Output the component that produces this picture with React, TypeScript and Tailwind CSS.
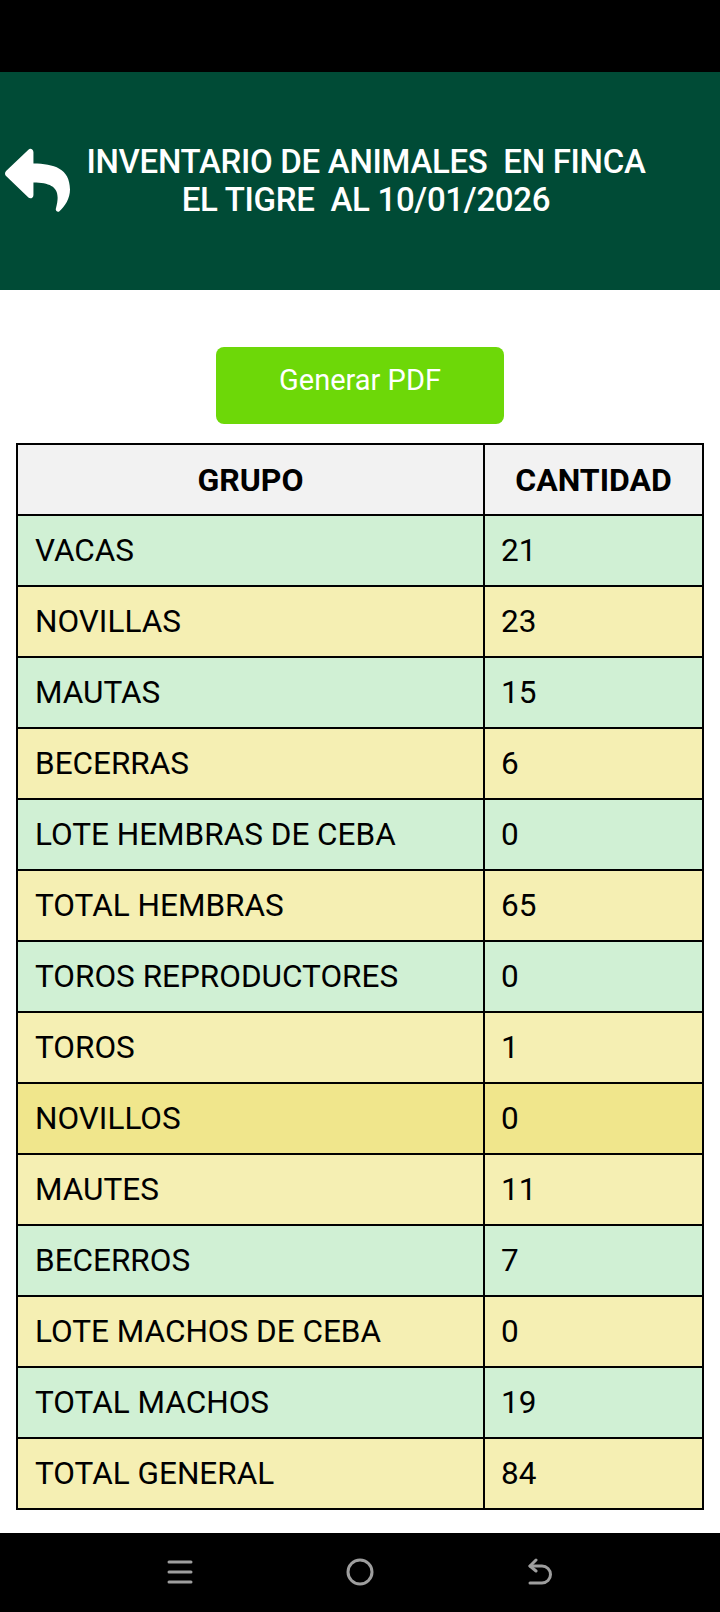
import React from "react";

type Row = { grupo: string; cantidad: number; tone: "green" | "yellow" | "khaki" };

const rows: Row[] = [
  { grupo: "VACAS", cantidad: 21, tone: "green" },
  { grupo: "NOVILLAS", cantidad: 23, tone: "yellow" },
  { grupo: "MAUTAS", cantidad: 15, tone: "green" },
  { grupo: "BECERRAS", cantidad: 6, tone: "yellow" },
  { grupo: "LOTE HEMBRAS DE CEBA", cantidad: 0, tone: "green" },
  { grupo: "TOTAL HEMBRAS", cantidad: 65, tone: "yellow" },
  { grupo: "TOROS REPRODUCTORES", cantidad: 0, tone: "green" },
  { grupo: "TOROS", cantidad: 1, tone: "yellow" },
  { grupo: "NOVILLOS", cantidad: 0, tone: "khaki" },
  { grupo: "MAUTES", cantidad: 11, tone: "yellow" },
  { grupo: "BECERROS", cantidad: 7, tone: "green" },
  { grupo: "LOTE MACHOS DE CEBA", cantidad: 0, tone: "yellow" },
  { grupo: "TOTAL MACHOS", cantidad: 19, tone: "green" },
  { grupo: "TOTAL GENERAL", cantidad: 84, tone: "yellow" },
];

const toneClass = {
  green: "bg-[#d0f0d4]",
  yellow: "bg-[#f5efb3]",
  khaki: "bg-[#f0e68c]",
};

function ReplyIcon() {
  return (
    <svg width="65" height="66" viewBox="0 26 512 470" preserveAspectRatio="none" fill="white">
      <path d="M8.309 189.836L184.313 37.851C199.719 24.546 224 35.347 224 56.015v80.053c160.629 1.839 288 34.032 288 186.258 0 61.441-39.581 122.309-83.333 154.132-13.653 9.931-33.111-2.533-28.077-18.631 45.344-145.012-21.507-183.51-176.59-185.742V360c0 20.7-24.3 31.453-39.687 18.164l-176.004-152c-11.071-9.562-11.086-26.753 0-36.328z" />
    </svg>
  );
}

export default function App() {
  return (
    <div className="w-[720px] h-[1612px] flex flex-col bg-white font-['Roboto',sans-serif]">
      {/* status bar */}
      <div className="h-[72px] bg-black" />

      {/* header */}
      <div className="h-[218px] bg-[#004b36] flex items-center pl-[5px] pr-[58px]">
        <ReplyIcon />
        <h1 className="flex-1 text-center text-white text-[33px] leading-[38px] font-medium tracking-[-0.3px] whitespace-pre">
          {"INVENTARIO DE ANIMALES  EN FINCA\nEL TIGRE  AL 10/01/2026"}
        </h1>
      </div>

      <div className="flex-1 flex flex-col items-center pt-[57px]">
        <button className="w-[288px] h-[77px] rounded-[8px] bg-[#6dd808] text-white text-[29px] pb-[10px]">
          Generar PDF
        </button>

        <table className="mt-[19px] w-[688px] border-collapse border-2 border-black text-black">
          <thead>
            <tr className="bg-[#f2f2f2] h-[71px]">
              <th className="w-[467px] border-2 border-black text-[32px] font-bold">GRUPO</th>
              <th className="border-2 border-black text-[32px] font-bold">CANTIDAD</th>
            </tr>
          </thead>
          <tbody>
            {rows.map((r) => (
              <tr key={r.grupo} className={`h-[71px] ${toneClass[r.tone]}`}>
                <td className="border-2 border-black pl-[17px] text-[31.5px]">{r.grupo}</td>
                <td className="border-2 border-black pl-[16px] text-[31.5px]">{r.cantidad}</td>
              </tr>
            ))}
          </tbody>
        </table>
      </div>

      {/* navigation bar */}
      <div className="h-[79px] bg-black flex items-center justify-center gap-[153px] pb-[2px]">
        <svg width="26" height="26" viewBox="0 0 26 26" stroke="#9e9e9e" strokeWidth="3" strokeLinecap="round">
          <line x1="2" y1="3" x2="24" y2="3" />
          <line x1="2" y1="13" x2="24" y2="13" />
          <line x1="2" y1="23" x2="24" y2="23" />
        </svg>
        <svg width="28" height="28" viewBox="0 0 28 28" fill="none" stroke="#9e9e9e" strokeWidth="3">
          <circle cx="14" cy="14" r="12" />
        </svg>
        <svg width="26" height="28" viewBox="0 0 26 28" fill="none" stroke="#9e9e9e" strokeWidth="3" strokeLinecap="round" strokeLinejoin="round">
          <path d="M9 2 L3 8 L9 13" />
          <path d="M3 8 H15 a8 8 0 0 1 0 17 H3" />
        </svg>
      </div>
    </div>
  );
}
